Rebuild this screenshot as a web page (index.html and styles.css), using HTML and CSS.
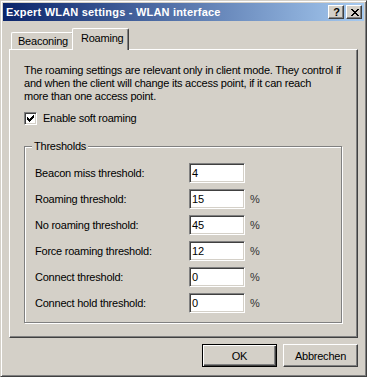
FILE: index.html
```html
<!DOCTYPE html>
<html>
<head>
<meta charset="utf-8">
<link rel="stylesheet" href="styles.css">
</head>
<body>
<div class="window">
  <div class="titlebar">
    <span class="title">Expert WLAN settings - WLAN interface</span>
    <div class="caption-buttons">
      <span class="cbtn help">?</span>
      <span class="cbtn close"><svg width="8" height="7" viewBox="0 0 8 7" shape-rendering="crispEdges"><path d="M0 0h2v1h-2zM6 0h2v1h-2zM1 1h2v1h-2zM5 1h2v1h-2zM2 2h4v1h-4zM3 3h2v1h-2zM2 4h4v1h-4zM1 5h2v1h-2zM5 5h2v1h-2zM0 6h2v1h-2zM6 6h2v1h-2z" fill="#000"/></svg></span>
    </div>
  </div>
  <div class="client">
    <div class="tabs">
      <div class="tab tab-beacon">Beaconing</div>
      <div class="tab tab-active">Roaming</div>
    </div>
    <div class="panel">
      <p class="intro">The roaming settings are relevant only in client mode. They control if<br>and when the client will change its access point, if it can reach<br>more than one access point.</p>
      <div class="check">
        <span class="box"><svg width="11" height="11" viewBox="0 0 11 11" shape-rendering="crispEdges"><path d="M2 4h1v3h-1zM3 5h1v3h-1zM4 6h1v3h-1zM5 5h1v3h-1zM6 4h1v3h-1zM7 3h1v3h-1zM8 2h1v3h-1z" fill="#000"/></svg></span>
        <span class="check-label">Enable soft roaming</span>
      </div>
      <div class="group">
        <div class="legend">Thresholds</div>
        <div class="rows">
          <span class="lbl">Beacon miss threshold:</span><span class="field">4</span><span class="unit"></span>
          <span class="lbl">Roaming threshold:</span><span class="field">15</span><span class="unit">%</span>
          <span class="lbl">No roaming threshold:</span><span class="field">45</span><span class="unit">%</span>
          <span class="lbl">Force roaming threshold:</span><span class="field">12</span><span class="unit">%</span>
          <span class="lbl">Connect threshold:</span><span class="field">0</span><span class="unit">%</span>
          <span class="lbl">Connect hold threshold:</span><span class="field">0</span><span class="unit">%</span>
        </div>
      </div>
    </div>
    <div class="actions">
      <span class="btn btn-default">OK</span>
      <span class="btn">Abbrechen</span>
    </div>
  </div>
</div>
</body>
</html>
```
FILE: styles.css
```css
* { box-sizing: border-box; }
html, body { margin: 0; padding: 0; }
body {
  width: 367px;
  height: 377px;
  overflow: hidden;
  background: #d4d0c8;
  font-family: "Liberation Sans", Arial, sans-serif;
  font-size: 11px;
  letter-spacing: -0.23px;
  color: #000;
}
.window {
  width: 367px;
  height: 377px;
  border: 1px solid;
  border-color: #d4d0c8 #404040 #404040 #d4d0c8;
  box-shadow: inset 1px 1px #fff, inset -1px -1px #808080;
  padding: 2px;
  display: flex;
  flex-direction: column;
}
.titlebar {
  height: 18px;
  flex: none;
  display: flex;
  align-items: flex-start;
  padding: 0 2px 0 3px;
  background: linear-gradient(to right, #0a246a, #a6caf0);
}
.title {
  color: #fff;
  font-weight: bold;
  font-size: 11px;
  letter-spacing: 0.2px;
  line-height: 18px;
  white-space: nowrap;
}
.caption-buttons {
  margin-left: auto;
  margin-top: 2px;
  display: flex;
  gap: 2px;
}
.cbtn {
  width: 16px;
  height: 14px;
  background: #d4d0c8;
  border: 1px solid;
  border-color: #fff #404040 #404040 #fff;
  box-shadow: inset -1px -1px #808080;
  display: flex;
  align-items: center;
  justify-content: center;
}
.help {
  font-weight: bold;
  font-size: 11px;
  letter-spacing: 0;
  line-height: 12px;
  padding-left: 1px;
}
.close svg { display: block; margin-left: 1px; }
.client {
  flex: 1;
  display: flex;
  flex-direction: column;
  padding: 7px 6px 0 6px;
}
.tabs {
  height: 21px;
  display: flex;
  align-items: flex-end;
  padding-left: 2px;
}
.tab {
  background: #d4d0c8;
  border-top: 1px solid #fff;
  border-left: 1px solid #fff;
  border-right: 1px solid #404040;
  box-shadow: inset -1px 0 #808080;
  border-radius: 2px 2px 0 0;
  white-space: nowrap;
}
.tab-beacon {
  width: 63px;
  height: 17px;
  padding: 2px 0 0 6px;
  line-height: 13px;
}
.tab-active {
  position: relative;
  z-index: 1;
  width: 57px;
  height: 22px;
  margin-left: -2px;
  margin-bottom: -1px;
  padding: 3px 0 0 8px;
  line-height: 13px;
}
.panel {
  height: 289px;
  flex: none;
  border: 1px solid;
  border-color: #fff #404040 #404040 #fff;
  box-shadow: inset -1px -1px #808080;
  padding: 14px 15px 0 14px;
}
.intro {
  margin: 0;
  line-height: 13px;
  white-space: nowrap;
}
.check {
  margin-top: 9px;
  display: flex;
  align-items: center;
  height: 13px;
}
.box {
  width: 13px;
  height: 13px;
  flex: none;
  background: #fff;
  border: 1px solid;
  border-color: #808080 #fff #fff #808080;
  box-shadow: inset 1px 1px #404040, inset -1px -1px #d4d0c8;
}
.box svg { display: block; }
.check-label { margin-left: 6px; line-height: 13px; }
.group {
  margin-top: 21px;
  width: 318px;
  height: 177px;
  border: 1px solid #808080;
  box-shadow: inset 1px 1px #fff, 1px 1px #fff;
}
.legend {
  width: fit-content;
  margin: -7px 0 0 7px;
  padding: 0 2px;
  background: #d4d0c8;
  line-height: 13px;
}
.rows {
  margin-top: 10px;
  padding-left: 10px;
  display: grid;
  grid-template-columns: 154px 56px auto;
  grid-auto-rows: 20px;
  row-gap: 6px;
  align-items: center;
}
.field {
  height: 20px;
  background: #fff;
  border: 1px solid;
  border-color: #808080 #fff #fff #808080;
  box-shadow: inset 1px 1px #404040, inset -1px -1px #d4d0c8;
  padding: 0 2px;
  line-height: 18px;
}
.unit {
  padding-left: 5px;
  color: #333;
}
.actions {
  margin-top: 6px;
  display: flex;
  justify-content: flex-end;
  gap: 6px;
}
.btn {
  width: 75px;
  height: 23px;
  display: flex;
  align-items: center;
  justify-content: center;
  background: #d4d0c8;
  border: 1px solid;
  border-color: #fff #404040 #404040 #fff;
  box-shadow: inset -1px -1px #808080;
}
.btn-default {
  border: 1px solid #000;
  box-shadow: inset 1px 1px #fff, inset -1px -1px #404040, inset -2px -2px #808080;
}
```
